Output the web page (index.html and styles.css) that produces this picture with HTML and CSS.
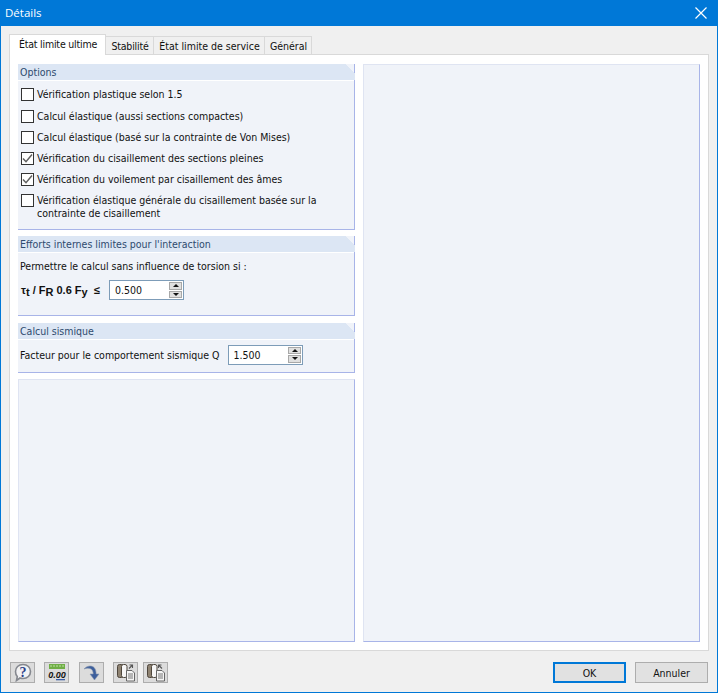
FILE: index.html
```html
<!DOCTYPE html>
<html lang="fr">
<head>
<meta charset="utf-8">
<title>Détails</title>
<link rel="stylesheet" href="styles.css">
</head>
<body>
<div class="window">
  <header class="titlebar">
    <span class="title">Détails</span>
    <svg class="close" width="12" height="12" viewBox="0 0 12 12"><path d="M.5 .5l11 11M11.500 .5l-11 11" stroke="#fff" stroke-width="1.200" fill="none"/></svg>
  </header>
  <main class="content">
    <nav class="tabs">
      <div class="tab active">État limite ultime</div>
      <div class="tab t2">Stabilité</div>
      <div class="tab t3">État limite de service</div>
      <div class="tab t4">Général</div>
    </nav>
    <section class="pane">
      <div class="col-left">
        <div class="panel p-options">
          <div class="phead">Options</div>
          <div class="pbody options">
            <label class="check"><span class="box"></span><span class="ctext">Vérification plastique selon 1.5</span></label>
            <label class="check"><span class="box"></span><span class="ctext">Calcul élastique (aussi sections compactes)</span></label>
            <label class="check"><span class="box"></span><span class="ctext">Calcul élastique (basé sur la contrainte de Von Mises)</span></label>
            <label class="check"><span class="box"><svg width="11" height="11" viewBox="0 0 11 11"><path d="M1 5.500l3 3.200L10 1.500" stroke="#606060" stroke-width="1.500" fill="none"/></svg></span><span class="ctext">Vérification du cisaillement des sections pleines</span></label>
            <label class="check"><span class="box"><svg width="11" height="11" viewBox="0 0 11 11"><path d="M1 5.500l3 3.200L10 1.500" stroke="#606060" stroke-width="1.500" fill="none"/></svg></span><span class="ctext">Vérification du voilement par cisaillement des âmes</span></label>
            <label class="check multi"><span class="box"></span><span>Vérification élastique générale du cisaillement basée sur la<br>contrainte de cisaillement</span></label>
          </div>
        </div>
        <div class="panel p-limits">
          <div class="phead">Efforts internes limites pour l'interaction</div>
          <div class="pbody">
            <div class="line">Permettre le calcul sans influence de torsion si :</div>
            <div class="formula-row">
              <span class="formula">τ<sub>t</sub> / F<sub>R</sub> 0.6 F<sub>y</sub> &nbsp;≤</span>
              <div class="spin"><span class="val">0.500</span><span class="arrows"><i class="up"></i><i class="down"></i></span></div>
            </div>
          </div>
        </div>
        <div class="panel p-seis">
          <div class="phead">Calcul sismique</div>
          <div class="pbody seis-row">
            <span>Facteur pour le comportement sismique Q</span>
            <div class="spin"><span class="val">1.500</span><span class="arrows"><i class="up"></i><i class="down"></i></span></div>
          </div>
        </div>
        <div class="blank"></div>
      </div>
      <div class="blank right"></div>
    </section>
    <footer class="footer">
      <div class="tools">
        <button class="tool"><svg width="22" height="19" viewBox="0 0 22 19"><path d="M11 1.500c4.500 0 7.500 3 7.500 7s-3 7-7.500 7c-1 0-2-.2-3-.5L4.500 17.500l.8-4C4 12.200 3.500 10.500 3.500 8.500c0-4 3-7 7.500-7z" fill="#f2f2f4" stroke="#85888f" stroke-width="1.600"/><text x="11" y="14" text-anchor="middle" class="qmark">?</text></svg></button>
        <button class="tool"><svg width="20" height="19" viewBox="0 0 20 19"><rect x="2" y="1" width="16" height="5" fill="#6fae45"/><path d="M4 2v2M7 2v2M10 2v2M13 2v2M16 2v2" stroke="#bfe0a5"/><text x="10" y="15" text-anchor="middle" class="zero">0.00</text><path d="M9 16h9v1.300H9z" fill="#3a5ea8"/></svg></button>
        <button class="tool"><svg width="20" height="19" viewBox="0 0 20 19"><path d="M2 6C5 2.500 10 2 12.500 5c1.200 1.500 1.600 3.500 1.600 6H17l-4.500 6L8 11h3.200C11.200 8.500 10.500 7 9 6 7 4.800 4.500 5 2 6z" fill="#3d5f9c" stroke="#8a97ad" stroke-width=".6"/></svg></button>
        <button class="tool"><svg width="20" height="19" viewBox="0 0 20 19"><rect x="1.500" y="1.500" width="6" height="13" rx="2" fill="#8f8372" stroke="#4e463c"/><rect x="5.500" y="1.500" width="5.500" height="13" rx="2" fill="#f6f6f6" stroke="#4e463c"/><path d="M10.500 7.500h5.500l2.500 2.500v8h-8z" fill="#f4f4f4" stroke="#666"/><path d="M12 11h5M12 13h5M12 15h5" stroke="#777"/><path d="M13 5.500l3-3M13.500 2h3v3" fill="none" stroke="#555" stroke-width="1.100"/></svg></button>
        <button class="tool"><svg width="20" height="19" viewBox="0 0 20 19"><rect x="1.500" y="1.500" width="6" height="13" rx="2" fill="#8f8372" stroke="#4e463c"/><rect x="5.500" y="1.500" width="5.500" height="13" rx="2" fill="#f6f6f6" stroke="#4e463c"/><path d="M10.500 7.500h5.500l2.500 2.500v8h-8z" fill="#f4f4f4" stroke="#666"/><path d="M12 11h5M12 13h5M12 15h5" stroke="#777"/><path d="M16 5.500l-3-3M12.500 5V2h3" fill="none" stroke="#555" stroke-width="1.100"/></svg></button>
      </div>
      <div class="actions">
        <button class="btn primary">OK</button>
        <button class="btn">Annuler</button>
      </div>
    </footer>
  </main>
</div>
</body>
</html>
```

FILE: styles.css
```css
* { box-sizing: border-box; }
html, body { margin: 0; padding: 0; }
body {
  width: 718px; height: 693px; overflow: hidden;
  font-family: "DejaVu Sans Condensed", "Liberation Sans", sans-serif;
  font-size: 10.5px; color: #111;
}
.window {
  width: 718px; height: 693px;
  display: flex; flex-direction: column;
  background: #f0f0f0;
  border: 1px solid #0078d7;
  border-top: 0;
}
.titlebar {
  flex: none; height: 26px;
  background: #0078d7; color: #fff;
  display: flex; align-items: center; justify-content: space-between;
  padding: 0 10px 0 4px;
  font-family: "Open Sans", sans-serif;
  font-size: 11.5px;
}
.title { padding-bottom: 2px; }
.content { flex: 1; display: flex; flex-direction: column; padding: 9px 8px 0 8px; min-height: 0; }
.tabs { flex: none; height: 19px; display: flex; align-items: flex-end; position: relative; z-index: 1; }
.tab {
  height: 18px; padding: 0 0 0 1px;
  background: #f0f0f0; white-space: nowrap;
  border: 1px solid #d9d9d9; border-bottom: 0; border-left: 0;
  display: flex; align-items: center; justify-content: center;
}
.tab.active { height: 21px; width: 97px; background: #fff; border-left: 1px solid #d9d9d9; margin-bottom: -1px; padding-bottom: 3px; letter-spacing: -.2px; }
.t2 { width: 48px; letter-spacing: -.2px; }
.t3 { width: 111px; }
.t4 { width: 47px; }
.pane {
  flex: none; width: 700px; height: 597px;
  background: #fff; border: 1px solid #d9d9d9;
  padding: 9px 8px 8px 8px;
  display: flex; gap: 8px;
}
.col-left { width: 337px; display: flex; flex-direction: column; }
.panel { background: #f0f3f9; border: solid #a8b4e8; border-width: 0 1px 1px 0; }
.phead {
  height: 16px; padding-left: 2px; margin-right: -1px;
  background: linear-gradient(225deg, transparent 7px, #dce6f4 7px);
  color: #2e4a6e; line-height: 17px;
}
.pbody { border-top: 1px solid #fff; }
.p-options { height: 166px; }
.p-limits { height: 80px; margin-top: 6px; }
.p-seis { height: 50px; margin-top: 7px; }
.options { padding: 3px 0 0 3px; display: flex; flex-direction: column; }
.check { display: flex; align-items: center; height: 21px; gap: 3px; }
.check:first-child { margin-bottom: 1px; }
.ctext { padding-bottom: 2px; }
.check.multi { height: 30px; align-items: flex-start; line-height: 13px; padding-top: 4px; }
.box {
  width: 13px; height: 13px; flex: none;
  background: #fff; border: 1px solid #333;
  display: flex; align-items: center; justify-content: center;
}
.line { padding: 5px 0 0 2px; height: 26px; line-height: 16px; }
.formula-row { display: flex; align-items: center; height: 22px; padding-left: 3px; }
.formula { width: 88px; font-family: "Liberation Sans", sans-serif; font-weight: 700; font-size: 11px; white-space: nowrap; }
.formula sub { font-size: 11px; vertical-align: -2px; line-height: 0; }
.spin {
  width: 75px; height: 20px;
  background: #fff; border: 1px solid #7d9cb8;
  display: flex; align-items: center; justify-content: space-between;
  padding: 0 1px 0 5px;
}
.arrows { width: 13px; height: 16px; display: flex; flex-direction: column; gap: 1px; }
.arrows i { flex: 1; background: #e0e0e0; border: 1px solid #a8a8a8; position: relative; display: block; }
.arrows i::after {
  content: ""; position: absolute; left: 3px; top: 1px;
  border: 3px solid transparent; border-top: 0; border-bottom: 3px solid #111;
}
.arrows i.down::after { border-bottom: 0; border-top: 3px solid #111; }
.seis-row { display: flex; align-items: center; gap: 8px; padding: 0 0 0 2px; height: 30px; }
.blank { background: #f0f3f9; border: 1px solid #dfe4f2; border-right-color: #a8b4e8; border-bottom-color: #a8b4e8; }
.col-left .blank { flex: 1; margin-top: 6px; }
.right { width: 337px; }
.footer { flex: 1; display: flex; align-items: flex-start; justify-content: space-between; padding: 11px 1px 0 1px; }
.tools { display: flex; gap: 9px; }
.tool {
  width: 25px; height: 21px; padding: 0; flex: none;
  background: #dcdcdc; border: 1px solid #adadad;
  display: flex; align-items: center; justify-content: center;
}
.tool:nth-child(3) { margin-left: 1px; }
.tool:nth-child(5) { margin-left: -4px; }
.qmark { font: 700 14px "Liberation Serif", serif; fill: #2a3f88; }
.zero { font: italic 700 9px "Liberation Sans", sans-serif; fill: #111; }
.actions { display: flex; gap: 9px; }
.btn {
  width: 73px; height: 21px; padding: 0;
  background: #e1e1e1; border: 1px solid #adadad;
  font: inherit; color: #111;
}
.btn.primary { border: 2px solid #0078d7; }
```
